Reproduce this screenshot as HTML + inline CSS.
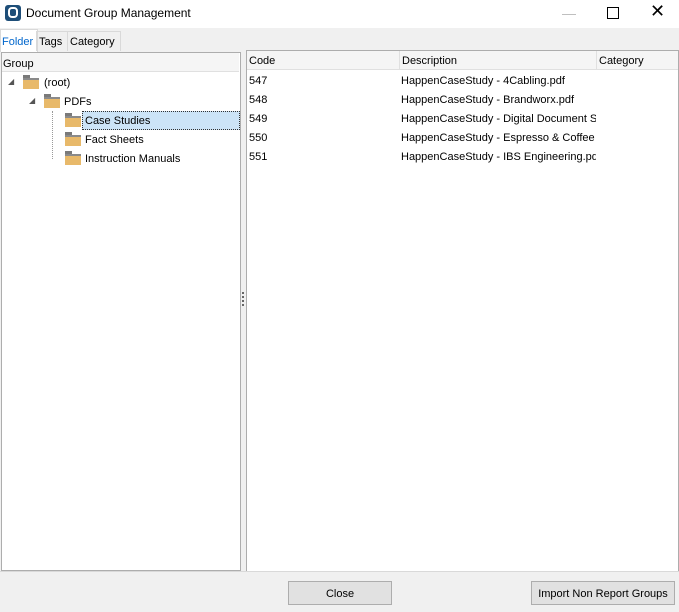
<!DOCTYPE html><html><head><style>
body{margin:0;width:679px;height:611px;background:#f0f0f0;font-family:"Liberation Sans",sans-serif;font-size:11px;color:#000;position:relative;overflow:hidden}
.a{position:absolute;white-space:nowrap}
.fold{position:absolute;width:16px;height:11px;background:#e8b96a}
.fold:before{content:"";position:absolute;left:0;top:-3px;width:7px;height:3px;background:#7a7a7a}
.fold:after{content:"";position:absolute;left:0;top:0;width:16px;height:2px;background:#8a8a8a}
.btn{position:absolute;background:#e1e1e1;border:1px solid #adadad;text-align:center;line-height:24px;box-sizing:border-box}
</style></head><body>
<div class="a" style="left:0;top:0;width:679px;height:28px;background:#fff"></div>
<div class="a" style="left:5px;top:5px;width:16px;height:16px;background:#1e4e78;border-radius:3px"></div>
<div class="a" style="left:8px;top:7px;border:2px solid #fff;border-radius:4px;box-sizing:border-box;width:10px;height:11px"></div>
<div class="a" style="left:26px;top:6px;font-size:12px">Document Group Management</div>
<div class="a" style="left:562px;top:5px;color:#bbb;font-size:14px">—</div>
<div class="a" style="left:607px;top:7px;width:10px;height:10px;border:1px solid #000"></div>
<div class="a" style="left:650px;top:1px;font-size:18px">✕</div>
<div class="a" style="left:0;top:29px;width:36px;height:22px;background:#fff;border:1px solid #d9d9d9;border-bottom:none"></div>
<div class="a" style="left:2px;top:36px;color:#0066cc">Folder</div>
<div class="a" style="left:36px;top:31px;width:30px;height:19px;border:1px solid #d9d9d9;border-bottom:none"></div>
<div class="a" style="left:39px;top:36px">Tags</div>
<div class="a" style="left:67px;top:31px;width:52px;height:19px;border:1px solid #d9d9d9;border-bottom:none"></div>
<div class="a" style="left:70px;top:36px">Category</div>
<div class="a" style="left:1px;top:52px;width:238px;height:517px;background:#fff;border:1px solid #adadad"></div>
<div class="a" style="left:2px;top:53px;width:237px;height:18px;background:#f5f5f5;border-bottom:1px solid #e0e0e0"></div>
<div class="a" style="left:3px;top:58px">Group</div>
<div class="a" style="left:8px;top:77px;font-size:8px;color:#555">◢</div>
<div class="fold" style="left:23px;top:78px"></div>
<div class="a" style="left:44px;top:77px">(root)</div>
<div class="a" style="left:29px;top:96px;font-size:8px;color:#555">◢</div>
<div class="fold" style="left:44px;top:97px"></div>
<div class="a" style="left:64px;top:96px">PDFs</div>
<div class="a" style="left:52px;top:111px;width:0;height:48px;border-left:1px dotted #999"></div>
<div class="a" style="left:82px;top:111px;width:156px;height:17px;background:#cce4f7;border:1px dotted #333"></div>
<div class="fold" style="left:65px;top:116px"></div>
<div class="a" style="left:85px;top:115px">Case Studies</div>
<div class="fold" style="left:65px;top:135px"></div>
<div class="a" style="left:85px;top:134px">Fact Sheets</div>
<div class="fold" style="left:65px;top:154px"></div>
<div class="a" style="left:85px;top:153px">Instruction Manuals</div>
<div class="a" style="left:242px;top:292px;width:2px;height:14px;border-left:2px dotted #666"></div>
<div class="a" style="left:246px;top:50px;width:431px;height:520px;background:#fff;border:1px solid #adadad"></div>
<div class="a" style="left:247px;top:51px;width:431px;height:18px;background:#f5f5f5;border-bottom:1px solid #e0e0e0"></div>
<div class="a" style="left:399px;top:51px;height:18px;border-left:1px solid #e0e0e0"></div>
<div class="a" style="left:596px;top:51px;height:18px;border-left:1px solid #e0e0e0"></div>
<div class="a" style="left:249px;top:55px">Code</div>
<div class="a" style="left:402px;top:55px">Description</div>
<div class="a" style="left:599px;top:55px">Category</div>
<div class="a" style="left:249px;top:72px;line-height:19px">547<br>548<br>549<br>550<br>551</div>
<div class="a" style="left:401px;top:72px;line-height:19px;width:195px;overflow:hidden">HappenCaseStudy - 4Cabling.pdf<br>HappenCaseStudy - Brandworx.pdf<br>HappenCaseStudy - Digital Document Solutions<br>HappenCaseStudy - Espresso &amp; Coffee Supplies<br>HappenCaseStudy - IBS Engineering.pdf</div>
<div class="a" style="left:0;top:571px;width:679px;height:40px;border-top:1px solid #d9d9d9;background:#f0f0f0"></div>
<div class="btn" style="left:288px;top:581px;width:104px;height:24px">Close</div>
<div class="btn" style="left:531px;top:581px;width:144px;height:24px">Import Non Report Groups</div>
</body></html>
